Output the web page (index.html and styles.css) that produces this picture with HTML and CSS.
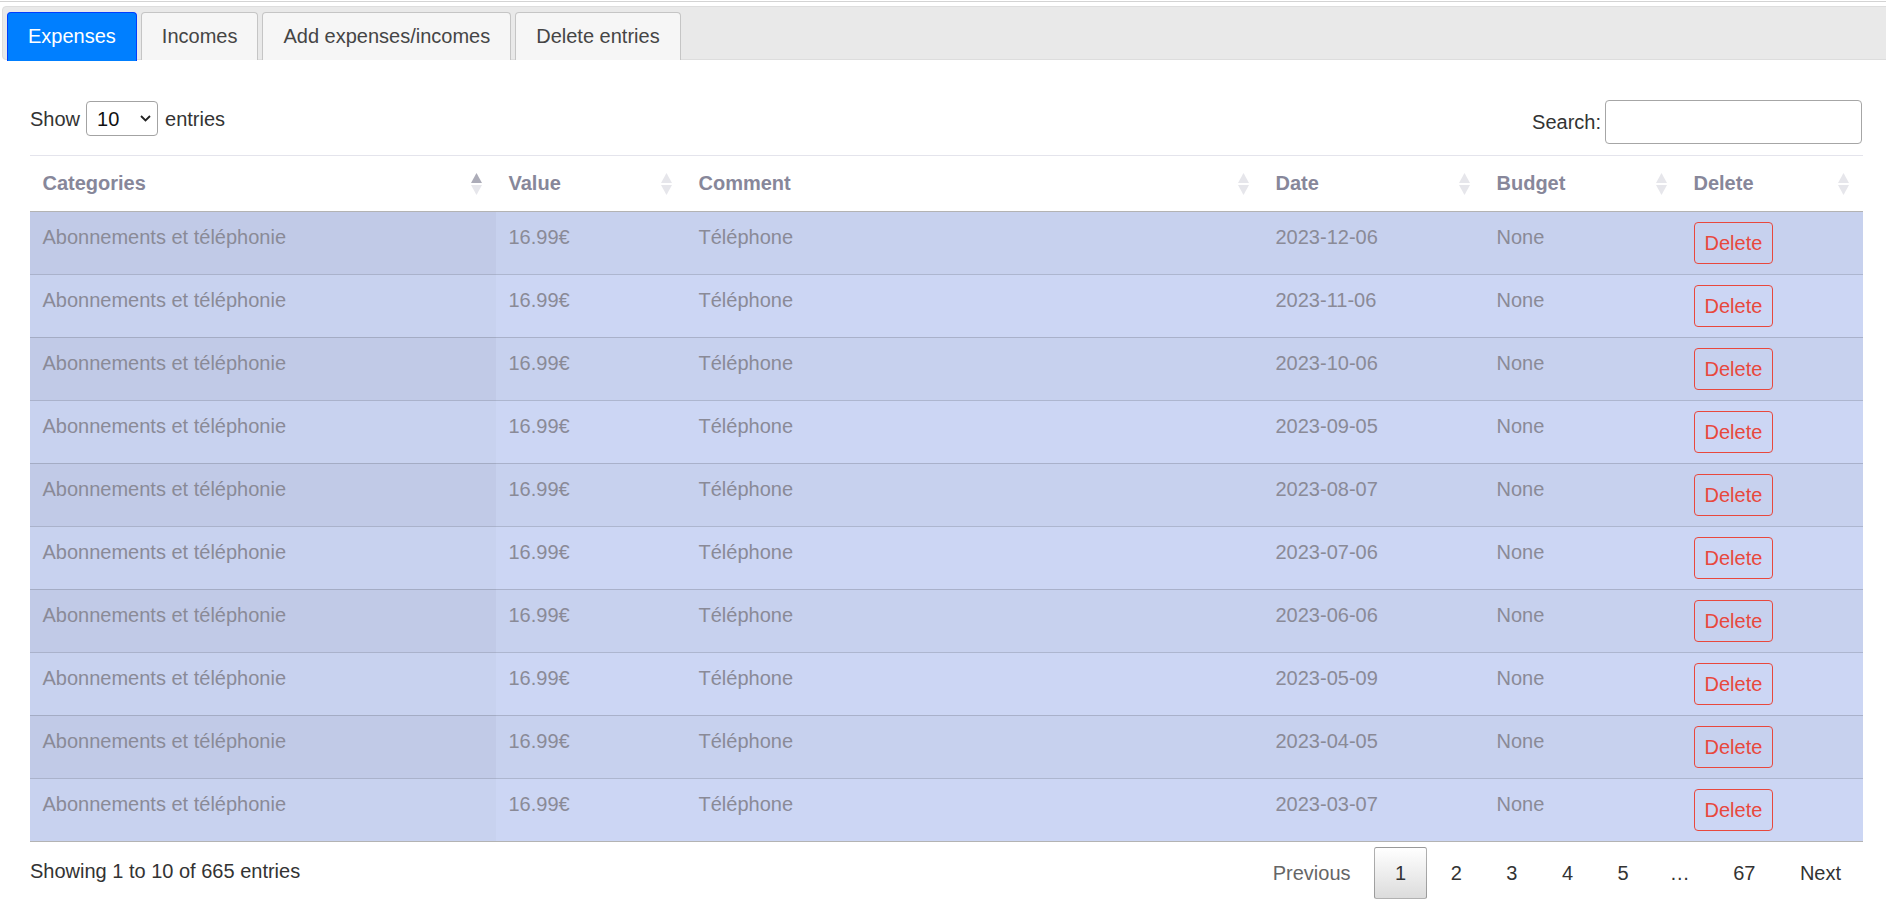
FILE: index.html
```html
<!DOCTYPE html>
<html lang="fr">
<head>
<meta charset="utf-8">
<title>Expenses</title>
<link rel="stylesheet" href="styles.css">
</head>
<body>
<div class="app">
  <ul class="nav">
    <li class="tab active"><a>Expenses</a></li>
    <li class="tab"><a>Incomes</a></li>
    <li class="tab"><a>Add expenses/incomes</a></li>
    <li class="tab"><a>Delete entries</a></li>
  </ul>
  <div class="panel">
    <div class="controls">
      <div class="length">
        <span>Show</span>
        <div class="select"><span>10</span><svg width="11" height="7" viewBox="0 0 11 7"><path d="M1 1l4.5 4.5L10 1" fill="none" stroke="#222" stroke-width="1.8"/></svg></div>
        <span>entries</span>
      </div>
      <div class="filter">
        <span>Search:</span>
        <div class="input"></div>
      </div>
    </div>
    <table class="grid">
      <colgroup>
        <col class="c1"><col class="c2"><col class="c3"><col class="c4"><col class="c5"><col class="c6">
      </colgroup>
      <thead>
        <tr>
          <th>Categories<svg class="sort" width="11" height="22" viewBox="0 0 11 22"><polygon points="5.5,0 11,10 0,10" class="on"/><polygon points="0,12 11,12 5.5,22" class="off"/></svg></th>
          <th>Value<svg class="sort" width="11" height="22" viewBox="0 0 11 22"><polygon points="5.5,0 11,10 0,10" class="off"/><polygon points="0,12 11,12 5.5,22" class="off"/></svg></th>
          <th>Comment<svg class="sort" width="11" height="22" viewBox="0 0 11 22"><polygon points="5.5,0 11,10 0,10" class="off"/><polygon points="0,12 11,12 5.5,22" class="off"/></svg></th>
          <th>Date<svg class="sort" width="11" height="22" viewBox="0 0 11 22"><polygon points="5.5,0 11,10 0,10" class="off"/><polygon points="0,12 11,12 5.5,22" class="off"/></svg></th>
          <th>Budget<svg class="sort" width="11" height="22" viewBox="0 0 11 22"><polygon points="5.5,0 11,10 0,10" class="off"/><polygon points="0,12 11,12 5.5,22" class="off"/></svg></th>
          <th>Delete<svg class="sort" width="11" height="22" viewBox="0 0 11 22"><polygon points="5.5,0 11,10 0,10" class="off"/><polygon points="0,12 11,12 5.5,22" class="off"/></svg></th>
        </tr>
      </thead>
      <tbody>
        <tr class="odd"><td class="sorted">Abonnements et téléphonie</td><td>16.99€</td><td>Téléphone</td><td>2023-12-06</td><td>None</td><td><button class="del">Delete</button></td></tr>
        <tr class="even"><td class="sorted">Abonnements et téléphonie</td><td>16.99€</td><td>Téléphone</td><td>2023-11-06</td><td>None</td><td><button class="del">Delete</button></td></tr>
        <tr class="odd"><td class="sorted">Abonnements et téléphonie</td><td>16.99€</td><td>Téléphone</td><td>2023-10-06</td><td>None</td><td><button class="del">Delete</button></td></tr>
        <tr class="even"><td class="sorted">Abonnements et téléphonie</td><td>16.99€</td><td>Téléphone</td><td>2023-09-05</td><td>None</td><td><button class="del">Delete</button></td></tr>
        <tr class="odd"><td class="sorted">Abonnements et téléphonie</td><td>16.99€</td><td>Téléphone</td><td>2023-08-07</td><td>None</td><td><button class="del">Delete</button></td></tr>
        <tr class="even"><td class="sorted">Abonnements et téléphonie</td><td>16.99€</td><td>Téléphone</td><td>2023-07-06</td><td>None</td><td><button class="del">Delete</button></td></tr>
        <tr class="odd"><td class="sorted">Abonnements et téléphonie</td><td>16.99€</td><td>Téléphone</td><td>2023-06-06</td><td>None</td><td><button class="del">Delete</button></td></tr>
        <tr class="even"><td class="sorted">Abonnements et téléphonie</td><td>16.99€</td><td>Téléphone</td><td>2023-05-09</td><td>None</td><td><button class="del">Delete</button></td></tr>
        <tr class="odd"><td class="sorted">Abonnements et téléphonie</td><td>16.99€</td><td>Téléphone</td><td>2023-04-05</td><td>None</td><td><button class="del">Delete</button></td></tr>
        <tr class="even"><td class="sorted">Abonnements et téléphonie</td><td>16.99€</td><td>Téléphone</td><td>2023-03-07</td><td>None</td><td><button class="del">Delete</button></td></tr>
      </tbody>
    </table>
    <div class="footer">
      <div class="info">Showing 1 to 10 of 665 entries</div>
      <div class="pager">
        <a class="pg disabled">Previous</a>
        <a class="pg current">1</a>
        <a class="pg">2</a>
        <a class="pg">3</a>
        <a class="pg">4</a>
        <a class="pg">5</a>
        <span class="ellipsis">…</span>
        <a class="pg">67</a>
        <a class="pg">Next</a>
      </div>
    </div>
  </div>
</div>
</body>
</html>
```

FILE: styles.css
```css
html, body {
  margin: 0;
  padding: 0;
  background: #ffffff;
}
body {
  overflow: hidden;
  font-family: "Liberation Sans", Arial, Helvetica, sans-serif;
  font-size: 20px;
  line-height: 30px;
  color: #333333;
}
.app {
  margin: 1px 0 0 -2px;
  width: 1888px;
  border-top: 1px solid #d3d3d3;
  padding: 4px 4px 0 4px;
}
.nav {
  list-style: none;
  margin: 0;
  padding: 5px 4px 0 4px;
  display: flex;
  align-items: flex-start;
  background: #e9e9e9;
  border: 1px solid #dddddd;
  border-radius: 4px;
  height: 47px;
}
.tab {
  margin: 0 4px -1px 0;
  border: 1px solid #c5c5c5;
  border-bottom: 0;
  border-radius: 4px 4px 0 0;
  background: #f6f6f6;
}
.tab a {
  display: block;
  padding: 10px 20px 10px;
  line-height: 27px;
  color: #454545;
  white-space: nowrap;
}
.tab.active {
  background: #007fff;
  border-color: #003eff;
  padding-bottom: 1px;
}
.tab.active a {
  color: #ffffff;
}
.panel {
  padding: 40px 28px 0 28px;
}
.controls {
  display: flex;
  justify-content: space-between;
  align-items: center;
  height: 44px;
}
.length {
  display: flex;
  align-items: center;
  align-self: flex-start;
  height: 35px;
  margin-top: 1px;
}
.select {
  box-sizing: border-box;
  width: 72px;
  height: 35px;
  margin: 0 7px 0 6px;
  border: 1px solid #a3a3a3;
  border-radius: 4px;
  display: flex;
  align-items: center;
  justify-content: space-between;
  padding: 0 6px 0 10px;
  color: #111;
}
.select svg {
  display: block;
}
.filter {
  display: flex;
  align-items: center;
}
.input {
  box-sizing: border-box;
  width: 257px;
  height: 44px;
  margin-left: 4px;
  border: 1px solid #a6a6a6;
  border-radius: 4px;
}
.grid {
  width: 1833px;
  table-layout: fixed;
  border-collapse: separate;
  border-spacing: 0;
  margin-top: 11px;
  border-top: 1px solid #e4e4ec;
  border-bottom: 1px solid #b3b3b3;
}
.c1 { width: 466px; }
.c2 { width: 190px; }
.c3 { width: 577px; }
.c4 { width: 221px; }
.c5 { width: 197px; }
.c6 { width: 182px; }
.grid th {
  position: relative;
  text-align: left;
  font-weight: bold;
  color: #87879a;
  padding: 12px 12.5px 12.5px;
  border-bottom: 1px solid #b3b3b3;
}
.sort {
  position: absolute;
  right: 14px;
  top: 17px;
}
.sort .on { fill: #acacb8; }
.sort .off { fill: #e6e6eb; }
.grid td {
  vertical-align: top;
  padding: 10px 12.5px;
  color: #8a8a97;
  border-top: 1px solid rgba(0, 0, 0, 0.15);
  white-space: nowrap;
}
.grid tbody tr:first-child td {
  border-top: 0;
}
.grid tr.odd td { background: #c7d1ee; }
.grid tr.even td { background: #ccd6f4; }
.grid tr.odd td.sorted { background: #c1cae7; }
.grid tr.even td.sorted { background: #c8d2ef; }
.del {
  display: block;
  box-sizing: border-box;
  height: 42px;
  padding: 5px 10px;
  font-family: inherit;
  font-size: 20px;
  line-height: 30px;
  color: #e8483d;
  background: transparent;
  border: 1px solid #e8483d;
  border-radius: 4px;
}
.footer {
  display: flex;
  justify-content: space-between;
  align-items: flex-start;
}
.info {
  padding-top: 14px;
  color: #333;
}
.pager {
  display: flex;
  padding-top: 5px;
}
.pg {
  box-sizing: border-box;
  min-width: 30px;
  padding: 10px 20px;
  margin-left: 2.5px;
  border: 1px solid transparent;
  border-radius: 2.5px;
  text-align: center;
  color: #333;
  line-height: 30px;
}
.pg.disabled {
  color: #666;
}
.pg.current {
  border-color: rgba(0, 0, 0, 0.3);
  background: linear-gradient(to bottom, #ffffff 0%, #dcdcdc 100%);
}
.ellipsis {
  padding: 11px 20px;
  line-height: 30px;
  color: #333;
}
```
